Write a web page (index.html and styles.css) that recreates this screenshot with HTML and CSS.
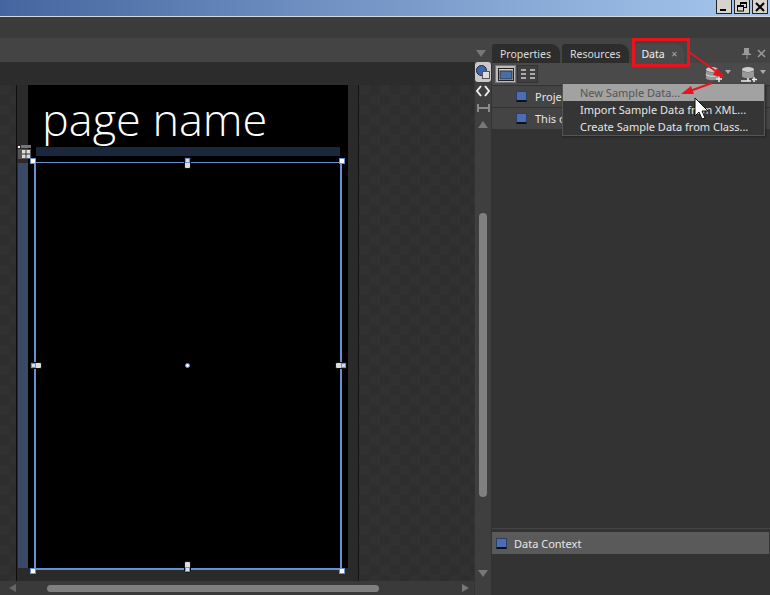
FILE: index.html
```html
<!DOCTYPE html>
<html>
<head>
	<meta charset="UTF-8">
	<title>Data panel</title>
	<link rel="stylesheet" href="styles.css">
</head>
<body>
	<div id="app">
		<div class="titlebar">
			<div class="winbtn"><svg width="10" height="10"><rect x="1" y="7" width="6" height="2" fill="#000"/></svg></div>
			<div class="winbtn"><svg width="10" height="10" fill="none" stroke="#000"><rect x="3.5" y="0.5" width="6" height="5"/><rect x="0.5" y="3.5" width="6" height="5.5" fill="#d6d3cc"/><path d="M1 4.5h5M4 1.5h5"/></svg></div>
			<div class="winbtn"><svg width="10" height="10" stroke="#000" stroke-width="2"><path d="M1 1l8 8M9 1l-8 8"/></svg></div>
		</div>
		<div class="menuband"></div>

		<div class="main">
			<div class="left">
				<div class="docband"><span class="tri tri-down band-arrow"></span></div>
				<div class="leftbody">
					<div class="leftcol">
						<div class="rulerband"></div>
						<div class="canvas">
							<div class="strip"></div>
							<div class="phone"></div>
							<div class="edge"></div>
							<div class="bluecol"></div>
							<div class="headerbar"></div>
							<div class="pagename">page name</div>
							<svg class="gridicon" width="13" height="14"><rect x="0" y="1" width="2" height="2" fill="#fff"/><rect x="0" y="4" width="13" height="10" fill="#555"/><rect x="3" y="0" width="10" height="3" fill="#777"/><rect x="4" y="5" width="8" height="8" fill="#ddd"/><path d="M8 5v8M4 9h8" stroke="#333"/></svg>

							<div class="selection"></div>
							<i class="handle h-tl"></i>
							<i class="handle h-tr"></i>
							<i class="handle h-bl"></i>
							<i class="handle h-br"></i>
							<i class="pill pill-v p-top"><b></b></i>
							<i class="pill pill-v p-bottom"><b></b></i>
							<i class="pill pill-h p-left"><b></b></i>
							<i class="pill pill-h p-right"><b></b></i>
							<i class="dot"></i>
						</div>
						<div class="hscroll">
							<span class="tri tri-left"></span>
							<div class="hthumb"></div>
							<span class="tri tri-right"></span>
						</div>
					</div>
					<div class="vscroll">
						<div class="vbtn active">
							<svg width="16" height="16"><circle cx="6.5" cy="6.5" r="5" fill="#3f66ad" stroke="#223"/><rect x="7.5" y="7.5" width="7" height="7" fill="#ddd" stroke="#555"/></svg>
						</div>
						<div class="vbtn">
							<svg width="14" height="12" fill="none" stroke="#eee" stroke-width="2"><path d="M5 1L1 6l4 5M9 1l4 5-4 5"/></svg>
						</div>
						<div class="vbtn">
							<svg width="13" height="8" fill="none" stroke="#8a8a8a" stroke-width="2"><path d="M1 0v8M12 0v8M1 4h11"/></svg>
						</div>
						<span class="tri tri-up v-up"></span>
						<div class="vthumb"></div>
						<span class="tri tri-down v-down"></span>
					</div>
				</div>
			</div>

			<div class="panel">
				<div class="tabs">
					<div class="tab">Properties</div>
					<div class="tab">Resources</div>
					<div class="tab current">Data <span class="tabx">✕</span></div>
					<div class="tabtools">
						<svg width="9" height="11"><path d="M2 0h5v5l2 1v1H5.500v4h-1V7H0V6l2-1z" fill="#9a9a9a"/></svg>
						<svg width="9" height="9" stroke="#9a9a9a" stroke-width="1.500"><path d="M1 1l7 7M8 1l-7 7"/></svg>
					</div>
				</div>
				<div class="toolbar">
					<div class="toolbtn on">
						<svg width="16" height="13"><rect x="0.500" y="0.500" width="15" height="12" fill="#ccc" stroke="#222"/><rect x="2" y="3" width="12" height="8" fill="#4a6da8" stroke="#333"/></svg>
					</div>
					<div class="toolbtn">
						<svg width="14" height="12" fill="#aaa"><rect x="0" y="1" width="5" height="2"/><rect x="9" y="1" width="5" height="2"/><rect x="0" y="5" width="5" height="2"/><rect x="9" y="5" width="5" height="2"/><rect x="0" y="9" width="5" height="2"/><rect x="9" y="9" width="5" height="2"/></svg>
					</div>
					<div class="toolright">
						<svg width="18" height="17"><ellipse cx="7" cy="3.500" rx="6" ry="2.500" fill="#ccc"/><path d="M1 4v8c0 3 12 3 12 0V4c0 3-12 3-12 0z" fill="#999"/><path d="M1 8c0 3 12 3 12 0" fill="none" stroke="#ddd"/><path d="M14 10v6M11 13h6" stroke="#eee" stroke-width="1.500"/></svg>
						<span class="tri tri-small"></span>
						<svg class="dbtwo" width="18" height="17"><ellipse cx="8" cy="3.500" rx="6" ry="2.500" fill="#ccc"/><path d="M2 4v6c0 3 12 3 12 0V4c0 3-12 3-12 0z" fill="#999"/><path d="M8 12v3M1 15h10" stroke="#eee" stroke-width="1.500"/><path d="M14 11v5M12 13.500h5" stroke="#eee" stroke-width="1.500"/></svg>
						<span class="tri tri-small"></span>
					</div>
				</div>
				<div class="rows">
					<div class="row"><span class="cube"></span>Project Data</div>
					<div class="row"><span class="cube"></span>This document</div>
				</div>
				<div class="filler"></div>
				<div class="context">
					<div class="ctxrow"><span class="cube"></span>Data Context</div>
				</div>
			</div>
		</div>

		<!-- menu and the red notes lie over the panel -->
		<ul class="menu">
			<li class="hot">New Sample Data...</li>
			<li>Import Sample Data from XML...</li>
			<li>Create Sample Data from Class...</li>
		</ul>
		<div class="redbox"></div>
		<svg class="notes" width="770" height="595">
			<g stroke="#e8141c" stroke-width="2" fill="#e8141c">
				<path d="M689 52L717 72" fill="none"/>
				<path d="M725 78l-12-3 4-7z" stroke="none"/>
				<path d="M712 83L690 91" fill="none"/>
				<path d="M681 94l10-8 3 8z" stroke="none"/>
			</g>
			<path d="M695 98v18l4-4 3 7 3-1-3-7h6z" fill="#fff" stroke="#111"/>
		</svg>
	</div>
</body>
</html>
```

FILE: styles.css
```css
* {
	padding: 0;
	margin: 0;
	box-sizing: border-box;
}

body {
	background: #3c3c3c;
	font-family: "Noto Sans", "Open Sans", sans-serif;
	font-size: 11px;
	color: #e6e6e6;
	overflow: hidden;
}

li {
	list-style: none;
}

#app {
	width: 770px;
	height: 595px;
	position: relative;
	overflow: hidden;
}

.titlebar {
	height: 17px;
	background: linear-gradient(to right, #44659f, #6e8fc0 40%, #a6c8ee);
	border-bottom: 1px solid #d8d8d8;
	display: flex;
	justify-content: flex-end;
	align-items: flex-start;
	gap: 2px;
	padding-right: 2px;
}

.winbtn {
	width: 16px;
	height: 14px;
	background: #d6d3cc;
	border: 1px solid #222;
	border-top: 0;
	display: flex;
	align-items: center;
	justify-content: center;
}

.menuband {
	height: 21px;
	background: #3b3b3b;
}

.main {
	display: flex;
	height: 557px;
}

.left {
	width: 491px;
	display: flex;
	flex-direction: column;
}

.docband {
	height: 24px;
	background: #444;
	padding-left: 476px;
	padding-top: 7px;
}

.leftbody {
	display: flex;
	flex: 1;
}

.leftcol {
	width: 474px;
	display: flex;
	flex-direction: column;
}

.rulerband {
	height: 23px;
	background: #2c2c2c;
}

.canvas {
	flex: 1;
	position: relative;
	overflow: hidden;
	background: repeating-conic-gradient(#2e2e2e 0 25%, #313131 0 50%) 0 0 / 20px 20px;
}

/* 设计区上的元素, canvas 坐标 = 截图坐标 - (0,85) */
.strip {
	position: absolute;
	left: 16px;
	top: 0;
	width: 343px;
	height: 496px;
	background: #2a2a2a;
	border-left: 1px solid #0e0e0e;
	border-right: 1px solid #141414;
}

.phone {
	position: absolute;
	left: 28px;
	top: 0;
	width: 320px;
	height: 483px;
	background: #000;
}

.bluecol {
	position: absolute;
	left: 18px;
	top: 78px;
	width: 10px;
	height: 405px;
	background: #3a4a66;
}

.headerbar {
	position: absolute;
	left: 36px;
	top: 62px;
	width: 304px;
	height: 9px;
	background: #1b273d;
}

.pagename {
	position: absolute;
	left: 42px;
	top: 1px;
	font-family: "Open Sans", sans-serif;
	font-weight: 300;
	font-size: 45px;
	line-height: 66px;
	color: #fff;
}

.gridicon {
	position: absolute;
	left: 18px;
	top: 60px;
}

.selection {
	position: absolute;
	left: 34px;
	top: 77px;
	width: 308px;
	height: 408px;
	border: 2px solid #6a90d4;
	border-width: 1px 2px 2px 2px;
}

.handle {
	position: absolute;
	width: 6px;
	height: 6px;
	background: #fff;
	border: 1px solid #6a90d4;
}

.h-tl { left: 30px; top: 73px; }
.h-tr { left: 339px; top: 73px; }
.h-bl { left: 30px; top: 483px; }
.h-br { left: 339px; top: 483px; }

.pill {
	position: absolute;
	background: #ddd;
	border: 1px solid #111;
	border-radius: 2px;
}

.pill b {
	position: absolute;
	width: 5px;
	height: 5px;
	background: #cfe0ff;
	border: 1px solid #6a90d4;
}

.pill-v {
	width: 7px;
	height: 12px;
}

.pill-h {
	width: 12px;
	height: 7px;
}

.p-top { left: 184px; top: 72px; }
.p-top b { left: 0; top: 0; }
.p-bottom { left: 184px; top: 476px; }
.p-bottom b { left: 0; bottom: 0; }
.p-left { left: 30px; top: 277px; }
.p-left b { left: 0; top: 0; }
.p-right { left: 335px; top: 277px; }
.p-right b { right: 0; top: 0; }

.dot {
	position: absolute;
	left: 185px;
	top: 278px;
	width: 5px;
	height: 5px;
	border-radius: 50%;
	background: #fff;
	border: 1px solid #6a90d4;
}

.hscroll {
	height: 14px;
	background: #3a3a3a;
	display: flex;
	align-items: center;
	position: relative;
	padding: 0 5px 0 9px;
}

.hthumb {
	width: 332px;
	height: 7px;
	border-radius: 4px;
	background: #808080;
	margin-left: 31px;
	margin-right: auto;
}

.vscroll {
	width: 17px;
	background: #3f3f3f;
	border-left: 1px solid #333;
	position: relative;
	padding-top: 0;
}

.vbtn {
	height: 17px;
	display: flex;
	align-items: center;
	justify-content: center;
}

.vbtn.active {
	height: 20px;
	background: #c8c8c8;
	border-radius: 3px;
}

.vthumb {
	position: absolute;
	left: 4px;
	top: 151px;
	width: 8px;
	height: 284px;
	border-radius: 4px;
	background: #808080;
}

.tri {
	display: inline-block;
	width: 0;
	height: 0;
	border-style: solid;
	border-color: transparent;
}

.tri-down {
	border-width: 7px 5px 0 5px;
	border-top-color: #777;
}

.tri-up {
	border-width: 0 5px 7px 5px;
	border-bottom-color: #777;
}

.tri-left {
	border-width: 4px 7px 4px 0;
	border-right-color: #666;
}

.tri-right {
	border-width: 4px 0 4px 7px;
	border-left-color: #777;
}

.tri-small {
	border-width: 4px 3.500px 0 3.500px;
	border-top-color: #aaa;
	margin-top: -4px;
	margin-left: 2px;
}

.v-up {
	position: absolute;
	left: 3px;
	top: 59px;
}

.v-down {
	position: absolute;
	left: 3px;
	top: 508px;
}

.panel {
	flex: 1;
	background: #333;
	padding-left: 1px;
	display: flex;
	flex-direction: column;
}

.tabs {
	height: 25px;
	background: #444;
	display: flex;
	align-items: flex-end;
	gap: 2px;
	padding-top: 6px;
	margin-left: -1px;
	padding-left: 1px;
}

.tab {
	height: 19px;
	padding: 0 9px 0 8px;
	background: #2d2d2d;
	border-radius: 3px 9px 0 0;
	line-height: 20px;
	font-size: 10.500px;
	color: #ddd;
}

.tab.current {
	background: #4a4a4a;
	margin-left: 2px;
	padding-right: 6px;
	color: #f2f2f2;
}

.tabx {
	font-size: 8px;
	color: #aaa;
	margin-left: 4px;
	vertical-align: 1px;
}

.tabtools {
	margin-left: auto;
	display: flex;
	align-items: center;
	gap: 6px;
	height: 19px;
	padding-right: 4px;
}

.toolbar {
	height: 22px;
	background: #4a4a4a;
	display: flex;
	align-items: center;
	padding: 0 3px;
	gap: 1px;
}

.toolbtn {
	width: 21px;
	height: 18px;
	border: 1px solid #333;
	background: #404040;
	display: flex;
	align-items: center;
	justify-content: center;
}

.toolbtn.on {
	background: #bbb;
	border-color: #777;
}

.toolright {
	margin-left: auto;
	display: flex;
	align-items: center;
	padding-right: 1px;
}

.dbtwo {
	margin-left: 9px;
}

.rows {
	padding-top: 1px;
}

.row {
	height: 21px;
	margin-bottom: 1px;
	background: #444;
	padding-left: 24px;
	display: flex;
	align-items: center;
	font-size: 11px;
}

.cube {
	width: 11px;
	height: 11px;
	background: #4a6db4;
	border: 1px solid #2c3e66;
	border-bottom: 2px solid #111;
	margin-right: 8px;
	flex-shrink: 0;
}

.filler {
	flex: 1;
}

.context {
	height: 67px;
	border-top: 1px solid #444;
	padding-top: 3px;
}

.ctxrow {
	height: 22px;
	background: #5a5a5a;
	padding-left: 4px;
	display: flex;
	align-items: center;
	font-size: 11px;
	margin-right: 1px;
}

.ctxrow .cube {
	margin-right: 7px;
}

.menu {
	position: absolute;
	left: 562px;
	top: 84px;
	width: 203px;
	height: 52px;
	background: #353535;
	border: 1px solid #555;
	border-top: 0;
	box-shadow: 1px 1px 2px #222;
}

.menu li {
	height: 17px;
	line-height: 17px;
	padding-left: 17px;
	font-size: 11px;
}

.menu .hot {
	background: #a2a2a2;
	color: #555;
}

.redbox {
	position: absolute;
	left: 632px;
	top: 38px;
	width: 58px;
	height: 29px;
	border: 3px solid #e8141c;
}

.notes {
	position: absolute;
	left: 0;
	top: 0;
}
```
